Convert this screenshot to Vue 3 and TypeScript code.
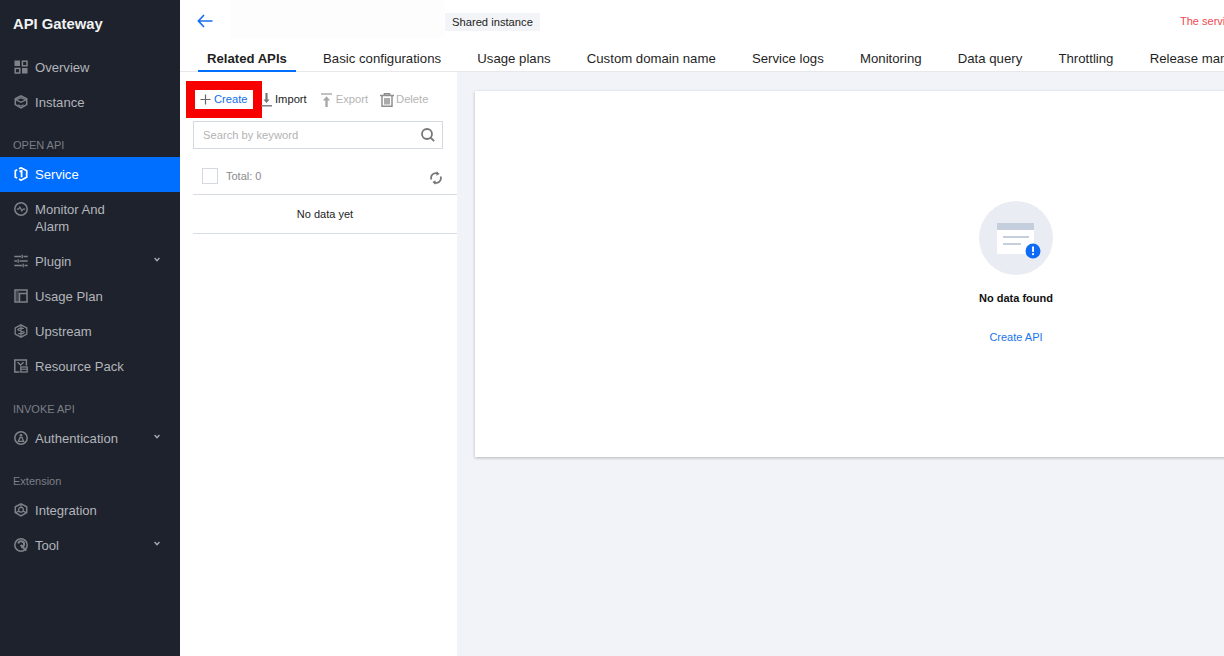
<script setup lang="ts">
interface Item { label: string; icon: string; active?: boolean; arrow?: boolean }
interface Group { title?: string; items: Item[] }
const groups: Group[] = [
  { items: [{ label: 'Overview', icon: 'overview' }, { label: 'Instance', icon: 'instance' }] },
  { title: 'OPEN API', items: [
    { label: 'Service', icon: 'service', active: true },
    { label: 'Monitor And Alarm', icon: 'monitor' },
    { label: 'Plugin', icon: 'plugin', arrow: true },
    { label: 'Usage Plan', icon: 'usage' },
    { label: 'Upstream', icon: 'upstream' },
    { label: 'Resource Pack', icon: 'resource' },
  ] },
  { title: 'INVOKE API', items: [{ label: 'Authentication', icon: 'auth', arrow: true }] },
  { title: 'Extension', items: [{ label: 'Integration', icon: 'integration' }, { label: 'Tool', icon: 'tool', arrow: true }] },
]
const tabs = ['Related APIs', 'Basic configurations', 'Usage plans', 'Custom domain name', 'Service logs', 'Monitoring', 'Data query', 'Throttling', 'Release management']
</script>

<template>
  <div class="page">
    <aside class="side">
      <div class="brand">API Gateway</div>
      <div v-for="(g, gi) in groups" :key="gi">
        <div v-if="g.title" class="group-title">{{ g.title }}</div>
        <div v-for="it in g.items" :key="it.label" class="item" :class="{ active: it.active }">
          <svg class="ico" viewBox="0 0 14 14" fill="none" stroke="currentColor" stroke-width="1.5">
            <template v-if="it.icon === 'overview'">
              <rect x="0.5" y="0.5" width="5.5" height="5.5" fill="currentColor" stroke="none" />
              <rect x="8.4" y="1.2" width="4.6" height="4.6" />
              <rect x="1.2" y="8.4" width="4.6" height="4.6" />
              <rect x="8" y="8" width="5.5" height="5.5" fill="currentColor" stroke="none" />
            </template>
            <template v-else-if="it.icon === 'instance'">
              <path d="M7 .9 12.7 3.8v5.8L7 13 1.3 9.6V3.8Z" />
              <path d="M2 4.8 7 2.6l5 2.2L7 7.4Z" stroke-width="1.2" />
              <path d="M4 9.8 7 11.2l2.6-1.4" stroke-width="1.2" />
            </template>
            <template v-else-if="it.icon === 'service'">
              <path d="M5 1.8 7 .8l5.7 3v6.4L7 13.2l-2-1.1M3.2 11l-1.9-.8V3.8L3.2 2.8" stroke-width="1.7" />
              <path d="M5.5 4.6 7.6 3.8v6.4" stroke-width="1.8" />
            </template>
            <template v-else-if="it.icon === 'monitor'">
              <circle cx="7" cy="7" r="6.2" />
              <path d="M2.8 7.2h1.8l1.3-2 2 3.6 1.2-1.6h2.1" stroke-width="1.2" />
            </template>
            <template v-else-if="it.icon === 'plugin'">
              <path d="M.3 2.5H7M9.5 2.5h4.2M.3 7H3M5.5 7h8.2M.3 11.5H8M10.5 11.5h3.2M8.2.8v3.4M4.2 5.3v3.4M9.2 9.8v3.4" stroke-width="1.3" />
            </template>
            <template v-else-if="it.icon === 'usage'">
              <rect x="1" y="1" width="12" height="12" />
              <path d="M5.5 13V4.4H13" />
              <rect x="2" y="2" width="3" height="10" fill="currentColor" fill-opacity=".4" stroke="none" />
            </template>
            <template v-else-if="it.icon === 'upstream'">
              <path d="M7 .8 12.8 3.8v6.4L7 13.2 1.2 10.2V3.8Z" stroke-width="1.3" />
              <path d="M9.8 4.4H5.2L3.8 5.8l6.4 2.4L8.8 9.6H4.2M7 1v12" stroke-width="1.2" />
            </template>
            <template v-else-if="it.icon === 'resource'">
              <path d="M5.5 13H.8V1H12.4v5.5" />
              <path d="M3.6 3.2 6.6 6l3-2.8" stroke-width="1.3" />
              <rect x="6.8" y="8" width="6.4" height="5" stroke-width="1.3" />
              <path d="M7 10.2h6" stroke-width="1.2" />
            </template>
            <template v-else-if="it.icon === 'auth'">
              <circle cx="7" cy="7" r="6.2" />
              <circle cx="7" cy="4.3" r="1.3" fill="currentColor" stroke="none" />
              <path d="M4.4 10.4h5.2L8 6.4H6Z" stroke-width="1.3" />
            </template>
            <template v-else-if="it.icon === 'integration'">
              <path d="M7 .9 12.7 3.8v5.8L7 13 1.3 9.6V3.8Z" />
              <circle cx="7" cy="6.8" r="2.4" stroke-width="1.2" />
              <path d="M7 1v3.4M2 9.6l2.9-1.6M12 9.6 9.1 8" stroke-width="1.2" />
            </template>
            <template v-else>
              <circle cx="7" cy="7" r="6.2" />
              <path d="M4.2 5.4a3 3 0 1 1 3 3.8M6.6 7l5.6 5.6" stroke-width="2" />
            </template>
          </svg>
          <span class="lbl">{{ it.label }}</span>
          <svg v-if="it.arrow" class="arrow" viewBox="0 0 6 5" fill="none" stroke="currentColor" stroke-width="1.4"><path d="M.6 1 3 3.6 5.4 1" /></svg>
        </div>
      </div>
    </aside>

    <main class="main">
      <header class="top">
        <svg class="back" viewBox="0 0 16 14" fill="none" stroke="#1a6fef" stroke-width="1.7"><path d="M7 1 1.4 7 7 13M1.6 7H15.5" /></svg>
        <div class="blank"></div>
        <span class="tag">Shared instance</span>
        <span class="warn">The service has been isolated</span>
      </header>
      <nav class="tabs">
        <div v-for="(t, i) in tabs" :key="t" class="tab" :class="{ on: i === 0 }">{{ t }}</div>
      </nav>
      <div class="body">
        <section class="left">
          <div class="tools">
            <div class="tool create">
              <svg viewBox="0 0 12 12" class="t-ico plus" fill="none" stroke="#666" stroke-width="1.3"><path d="M6 .5v11M.5 6h11" /></svg>
              <span>Create</span>
            </div>
            <div class="tool import">
              <svg viewBox="0 0 11 14" class="t-ico dl" fill="none" stroke="#777"><path d="M5.5 0V8" stroke-width="2.2" /><path d="M2.4 6.4h6.2L5.5 10Z" fill="#777" stroke="none" /><path d="M0 12.8h11" stroke-width="1.4" /></svg>
              <span>Import</span>
            </div>
            <div class="tool off export">
              <svg viewBox="0 0 11 14" class="t-ico dl" fill="none" stroke="#a8a8a8"><path d="M0 1h11" stroke-width="1.4" /><path d="M5.5 14V6" stroke-width="2.4" /><path d="M1.8 7.6h7.4L5.5 3.2Z" fill="#a8a8a8" stroke="none" /></svg>
              <span>Export</span>
            </div>
            <div class="tool off del">
              <svg viewBox="0 0 14 14" class="t-ico tr" fill="none" stroke="#8f8f8f" stroke-width="1.5"><path d="M0 2.6h14M4.4 2.4V.8h5.2v1.6M2 3v10.2h10V3M5 5v6.5M7 5v6.5M9 5v6.5" /></svg>
              <span>Delete</span>
            </div>
          </div>
          <div class="search">
            <span>Search by keyword</span>
            <svg viewBox="0 0 14 14" class="glass" fill="none" stroke="#777" stroke-width="1.8"><circle cx="6" cy="6" r="5" /><path d="m9.6 9.6 3.6 3.6" /></svg>
          </div>
          <div class="list-head">
            <span class="check"></span>
            <span class="total">Total: 0</span>
            <svg viewBox="0 0 12 14" class="refresh" fill="none" stroke="#777" stroke-width="1.8"><path d="M1.4 8.5A4.8 4.8 0 0 1 7.6 2.4M10.6 5.5a4.8 4.8 0 0 1-6.2 6.1" /><path d="M6.6.2 9.6 3 6.4 4.8ZM5.4 13.8 2.4 11l3.2-1.8Z" fill="#777" stroke="none" /></svg>
          </div>
          <div class="nodata">No data yet</div>
        </section>
        <section class="right">
          <div class="card">
            <svg class="illus" viewBox="0 0 74 74">
              <circle cx="37" cy="37" r="37" fill="#e9ecf2" />
              <rect x="18" y="22" width="37" height="31" fill="#fff" />
              <rect x="18" y="22" width="37" height="7" fill="#c5cedd" />
              <rect x="24" y="35" width="26" height="2" fill="#c5cedd" />
              <rect x="24" y="42" width="18" height="2" fill="#c5cedd" />
              <circle cx="54" cy="50" r="7.5" fill="#0f6bf5" />
              <rect x="53.1" y="45.5" width="1.9" height="5.4" fill="#fff" />
              <rect x="53.1" y="52.2" width="1.9" height="1.9" fill="#fff" />
            </svg>
            <div class="nf">No data found</div>
            <div class="link">Create API</div>
          </div>
        </section>
      </div>
    </main>
    <div class="mark"></div>
  </div>
</template>

<style>
html, body { margin: 0; overflow: hidden; background: #fff; }
</style>

<style scoped>
.page { position: relative; display: flex; width: 1224px; height: 656px; overflow: hidden; font-family: "Liberation Sans", Arial, sans-serif; font-size: 12px; color: #1c1c1c; }
.side { width: 180px; flex: none; background: #1e222d; color: #b2b5ba; font-size: 13.1px; }
.brand { height: 50px; padding-left: 13px; line-height: 49px; font-size: 14.8px; font-weight: 700; color: #f1f2f3; box-sizing: border-box; }
.group-title { height: 37px; box-sizing: border-box; padding: 18px 0 0 13px; font-size: 11px; line-height: 14px; color: #7b7f86; }
.item { display: flex; align-items: flex-start; padding: 9px 14px; line-height: 17px; position: relative; }
.item.active { background: #006eff; color: #fff; }
.ico { width: 14px; height: 14px; flex: none; margin: 1px 7px 0 0; color: #7f8389; }
.active .ico { color: #fff; }
.lbl { width: 100px; }
.arrow { position: absolute; left: 154px; top: 13px; width: 6px; height: 5px; color: #a8abb0; }
.main { flex: 1; min-width: 0; display: flex; flex-direction: column; }
.top { height: 44px; flex: none; display: flex; align-items: flex-start; position: relative; }
.back { width: 16px; height: 14px; margin: 14px 0 0 17px; flex: none; }
.blank { width: 214px; height: 38px; margin-left: 17px; background: #fdfdfd; flex: none; }
.tag { margin: 13px 0 0 1px; height: 18px; line-height: 18px; padding: 0 7px; background: #f3f4f7; font-size: 11.2px; color: #1c1c1c; flex: none; }
.warn { position: absolute; left: 1000px; top: 15px; font-size: 11px; line-height: 13px; color: #f0484f; white-space: nowrap; }
.tabs { height: 27px; flex: none; display: flex; padding-left: 18px; border-bottom: 1px solid #e6e8ec; gap: 18.2px; white-space: nowrap; }
.tab { padding: 0 9px; height: 27px; line-height: 29px; font-size: 13.2px; flex: none; color: #1f1f1f; }
.tab.on { font-size: 13.15px; font-weight: 700; height: 26px; border-bottom: 2px solid #006eff; }
.body { flex: 1; display: flex; min-height: 0; }
.left { width: 277px; flex: none; background: #fff; box-sizing: border-box; padding-left: 13px; }
.tools { display: flex; height: 49px; position: relative; z-index: 2; font-size: 11.2px; }
.tool { display: flex; align-items: center; height: 19px; margin-top: 18px; line-height: 17px; }
.create { width: 58px; margin-left: 2px; padding-left: 5px; box-sizing: border-box; color: #0f6fe8; background: #fff; }
.import { margin-left: 8px; color: #1c1c1c; }
.import .dl, .create .plus { margin-right: 3px; }
.export { margin-left: 14px; }
.del { margin-left: 12px; }
.off { color: #b4b4b4; }
.t-ico { flex: none; }
.plus { width: 11px; height: 11px; margin-right: 4px; }
.dl { width: 11px; height: 14px; margin-right: 4px; }
.tr { width: 14px; height: 14px; margin-right: 2px; }
.search { width: 250px; height: 28px; box-sizing: border-box; border: 1px solid #d4d8df; display: flex; align-items: center; justify-content: space-between; padding: 0 7px 0 9px; font-size: 11.2px; color: #b3b3b3; }
.glass { width: 14px; height: 14px; }
.list-head { height: 36px; padding-top: 9px; display: flex; align-items: center; position: relative; border-bottom: 1px solid #d8dde5; }
.check { width: 14px; height: 14px; border: 1px solid #d4d8df; margin-left: 9px; }
.total { margin-left: 8px; font-size: 11px; color: #8a8a8a; }
.refresh { position: absolute; left: 237px; top: 22px; width: 12px; height: 14px; }
.nodata { height: 38px; line-height: 38px; text-align: center; font-size: 11px; color: #1c1c1c; border-bottom: 1px solid #d8dde5; width: 264px; }
.right { flex: 1; min-width: 0; background: #f2f3f8; padding: 19px 0 0 18px; }
.card { height: 366px; width: 1082px; background: #fff; box-shadow: 0 1px 3px rgba(0, 0, 0, .25); display: flex; flex-direction: column; align-items: center; box-sizing: border-box; padding-top: 110px; }
.illus { width: 74px; height: 74px; }
.nf { margin-top: 16px; font-size: 11px; font-weight: 700; line-height: 14px; color: #111; }
.link { margin-top: 25px; font-size: 11px; line-height: 14px; color: #1a74ec; }
.mark { position: absolute; left: 186px; top: 81px; width: 58px; height: 19px; border: 9px solid #f70000; pointer-events: none; }
</style>
